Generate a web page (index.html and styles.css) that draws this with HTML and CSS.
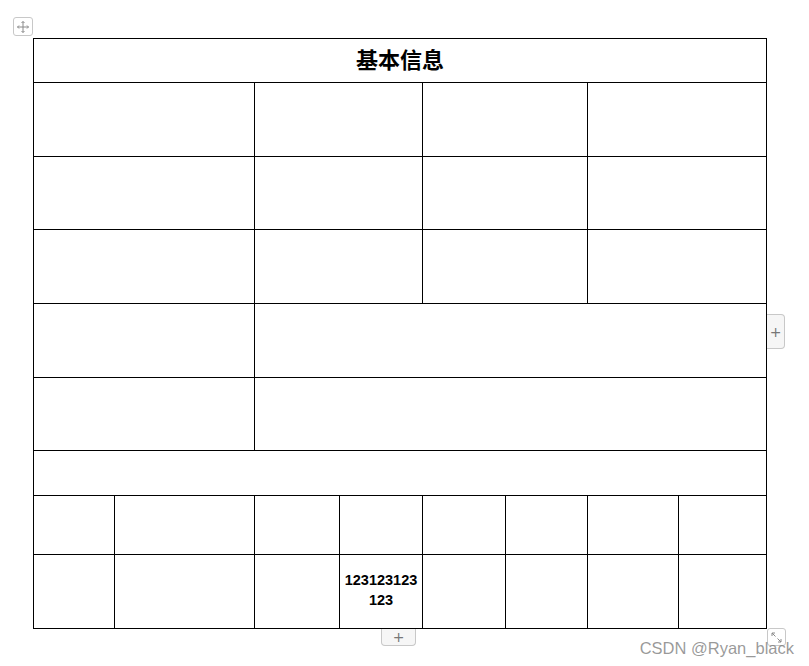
FILE: index.html
```html
<!DOCTYPE html>
<html lang="zh">
<head>
<meta charset="utf-8">
<title>基本信息</title>
<link rel="stylesheet" href="styles.css">
</head>
<body>
<div class="page">
  <div class="sheet">
    <div class="grid">
      <div class="cell span8 title">基本信息</div>

      <div class="cell span2"></div><div class="cell span2"></div><div class="cell span2"></div><div class="cell span2"></div>
      <div class="cell span2"></div><div class="cell span2"></div><div class="cell span2"></div><div class="cell span2"></div>
      <div class="cell span2"></div><div class="cell span2"></div><div class="cell span2"></div><div class="cell span2"></div>

      <div class="cell span2"></div><div class="cell span6"></div>
      <div class="cell span2"></div><div class="cell span6"></div>

      <div class="cell span8"></div>

      <div class="cell"></div><div class="cell"></div><div class="cell"></div><div class="cell"></div>
      <div class="cell"></div><div class="cell"></div><div class="cell"></div><div class="cell"></div>

      <div class="cell"></div><div class="cell"></div><div class="cell"></div>
      <div class="cell value">123123123123</div>
      <div class="cell"></div><div class="cell"></div><div class="cell"></div><div class="cell"></div>
    </div>

    <div class="tool move" aria-label="移动">
      <svg width="14" height="14" viewBox="0 0 14 14" fill="none" stroke="#8a8a8a" stroke-width="1">
        <path d="M7 1.5v11M1.5 7h11"/>
        <path d="M5.5 3L7 1.5 8.5 3M5.5 11L7 12.5 8.5 11M3 5.5L1.5 7 3 8.5M11 5.5L12.5 7 11 8.5" stroke-linejoin="round"/>
      </svg>
    </div>
    <div class="tool add-col">+</div>
    <div class="tool add-row">+</div>
    <div class="tool resize" aria-label="调整大小">
      <svg width="13" height="13" viewBox="0 0 13 13" fill="none" stroke="#8a8a8a" stroke-width="1">
        <path d="M2 2l3.5 3.5M2 2h3M2 2v3"/>
        <path d="M11 11L7.5 7.5M11 11H8M11 11V8"/>
      </svg>
    </div>
  </div>
  <div class="watermark">CSDN @Ryan_black</div>
</div>
</body>
</html>
```
FILE: styles.css
```css
html, body {
  margin: 0;
  padding: 0;
  background: #ffffff;
}

.page {
  position: relative;
  width: 809px;
  height: 666px;
  overflow: hidden;
  font-family: "Liberation Sans", Arial, sans-serif;
}

.sheet {
  position: relative;
  padding: 38px 0 0 33px;
}

.grid {
  display: grid;
  width: 734px;
  box-sizing: border-box;
  border: 1px solid #000;
  background: #000;
  gap: 1px;
  grid-template-columns: 80px 139px 84px 82px 82px 81px 90px 87px;
  grid-template-rows: 43px 73px 72px 73px 73px 72px 44px 58px 73px;
}

.cell {
  background: #fff;
}

.span2 { grid-column: span 2; }
.span6 { grid-column: span 6; }
.span8 { grid-column: span 8; }

.title {
  display: flex;
  align-items: center;
  justify-content: center;
  padding-bottom: 5px;
  box-sizing: border-box;
  font-family: "Noto Sans CJK SC", "Noto Sans", sans-serif;
  font-weight: 700;
  font-size: 22px;
  color: #000;
}

.value {
  display: flex;
  align-items: center;
  justify-content: center;
  text-align: center;
  padding: 0 3px 3px;
  box-sizing: border-box;
  font-weight: 700;
  font-size: 14.5px;
  line-height: 20px;
  word-break: break-all;
  color: #000;
}

.tool {
  position: absolute;
  box-sizing: border-box;
  border: 1px solid #c8c8c8;
  background: #f6f6f6;
  color: #777;
  display: flex;
  align-items: center;
  justify-content: center;
  font-family: "DejaVu Sans", sans-serif;
}

.move {
  left: 13px;
  top: 17px;
  width: 20px;
  height: 19px;
  border-radius: 3px;
  background: #fff;
}

.add-col {
  left: 767px;
  top: 314px;
  width: 18px;
  height: 35px;
  border-left: none;
  border-radius: 0 4px 4px 0;
  font-size: 14px;
}

.add-row {
  left: 381px;
  top: 629px;
  width: 35px;
  height: 17px;
  border-top: none;
  border-radius: 0 0 4px 4px;
  font-size: 14px;
  line-height: 1;
}

.resize {
  left: 767px;
  top: 628px;
  width: 19px;
  height: 18px;
  border-radius: 3px;
  background: #fff;
}

.watermark {
  position: absolute;
  right: 15px;
  top: 639px;
  font-size: 16.5px;
  line-height: 18px;
  color: rgba(120, 120, 120, 0.75);
  font-family: "Liberation Sans", Arial, sans-serif;
  white-space: nowrap;
}
```
